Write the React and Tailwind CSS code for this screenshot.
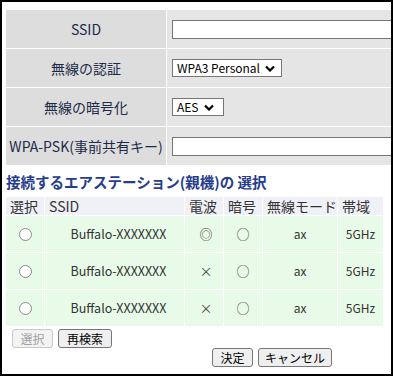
import React from 'react';

const font = { fontFamily: "'Noto Sans CJK JP', 'Noto Sans', sans-serif" };

function Chevron() {
  return (
    <svg width="10" height="7" viewBox="0 0 10 7" className="ml-[5px]">
      <path d="M1 1.5 L5 5.5 L9 1.5" stroke="#000" strokeWidth="2.2" fill="none" />
    </svg>
  );
}

function Select({ value, width }) {
  return (
    <div className={`flex items-center h-[18px] ${width} border border-[#767676] bg-white pl-[4px] text-[12px] leading-none text-black`}>
      <span className="whitespace-nowrap">{value}</span>
      <Chevron />
    </div>
  );
}

function TextInput() {
  return <div className="h-[19px] w-[260px] border border-[#767676] bg-white"></div>;
}

function Radio() {
  return <span className="block w-[13px] h-[13px] rounded-full border border-[#8a8a8a] bg-white"></span>;
}

function Btn({ children, width, disabled }) {
  return (
    <button
      className={`h-[19px] ${width} rounded-[3px] border text-[12px] leading-none flex items-center justify-center ${
        disabled ? 'border-[#c8c8c8] bg-[#f3f3f3] text-[#a0a0a0]' : 'border-[#767676] bg-[#efefef] text-black'
      }`}
    >
      {children}
    </button>
  );
}

const settings = [
  { label: 'SSID', field: <TextInput /> },
  { label: '無線の認証', field: <Select value="WPA3 Personal" width="w-[110px]" /> },
  { label: '無線の暗号化', field: <Select value="AES" width="w-[52px]" /> },
  { label: 'WPA-PSK(事前共有キー)', field: <TextInput /> },
];

const stations = [
  { ssid: 'Buffalo-XXXXXXX', signal: '◎', enc: '○', mode: 'ax', band: '5GHz' },
  { ssid: 'Buffalo-XXXXXXX', signal: '×', enc: '○', mode: 'ax', band: '5GHz' },
  { ssid: 'Buffalo-XXXXXXX', signal: '×', enc: '○', mode: 'ax', band: '5GHz' },
];

export default function App() {
  return (
    <div className="w-[393px] h-[376px] border-2 border-black bg-white overflow-hidden" style={font}>
      <div className="pl-[4px] pt-[8px]">

        {/* Settings table */}
        <div className="grid grid-cols-[160px_420px] gap-px w-max">
          {settings.map((s) => (
            <React.Fragment key={s.label}>
              <div className="h-[38px] bg-[#dddddd] flex items-center justify-center text-[14px] text-[#1c2a48] whitespace-nowrap">
                {s.label}
              </div>
              <div className="h-[38px] bg-[#e5e5e5] flex items-center pl-[5px]">{s.field}</div>
            </React.Fragment>
          ))}
        </div>

        {/* Heading */}
        <h2 className="mt-[7px] mb-[5px] text-[14.5px] leading-[20px] font-bold text-[#263c8c] whitespace-nowrap">
          接続するエアステーション(親機)の 選択
        </h2>

        {/* Station list */}
        <div className="grid grid-cols-[38px_139px_38px_38px_74px_45px] gap-px w-max text-[#333]">
          {['選択', 'SSID', '電波', '暗号', '無線モード', '帯域'].map((h) => (
            <div key={h} className="h-[18px] bg-[#f0f0f7] pl-[4px] text-[14px] leading-[18px] whitespace-nowrap">
              {h}
            </div>
          ))}
          {stations.map((st, i) => (
            <React.Fragment key={i}>
              <div className="h-[36px] bg-[#e8fbe8] flex items-center justify-center"><Radio /></div>
              <div className="h-[36px] bg-[#e8fbe8] flex items-center justify-center pl-[8px] text-[12.5px]">{st.ssid}</div>
              <div className="h-[36px] bg-[#e8fbe8] flex items-center justify-center pl-[4px] text-[13px] text-[#444]">{st.signal}</div>
              <div className="h-[36px] bg-[#e8fbe8] flex items-center justify-center text-[13px] text-[#444]">{st.enc}</div>
              <div className="h-[36px] bg-[#e8fbe8] flex items-center justify-center text-[12px]">{st.mode}</div>
              <div className="h-[36px] bg-[#e8fbe8] flex items-center justify-center text-[12px]">{st.band}</div>
            </React.Fragment>
          ))}
        </div>

        {/* Buttons */}
        <div className="flex gap-[5px] mt-[3px] pl-[6px]">
          <Btn width="w-[41px]" disabled>選択</Btn>
          <Btn width="w-[54px]">再検索</Btn>
        </div>
        <div className="flex gap-[5px] pl-[206px]">
          <Btn width="w-[41px]">決定</Btn>
          <Btn width="w-[74px]">キャンセル</Btn>
        </div>
      </div>
    </div>
  );
}
